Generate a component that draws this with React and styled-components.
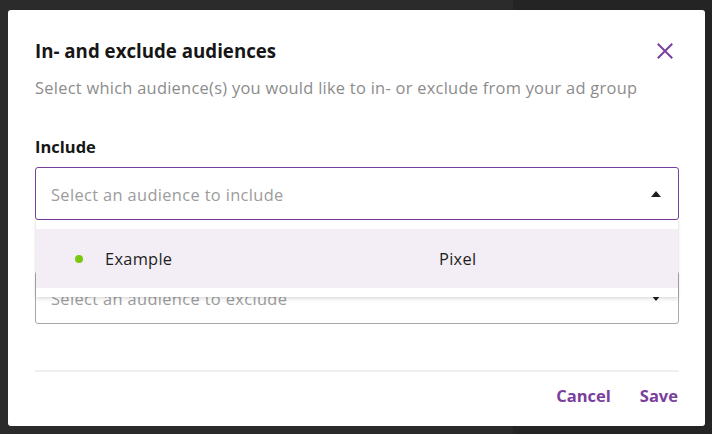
import styled, { createGlobalStyle } from "styled-components";

const GlobalStyle = createGlobalStyle`
  html, body {
    margin: 0;
    padding: 0;
    background: #262626;
  }
  body {
    font-family: "Open Sans", "Liberation Sans", sans-serif;
  }
`;

const purple = "#7a3e9d";

const Backdrop = styled.div`
  width: 712px;
  height: 434px;
  box-sizing: border-box;
  padding: 10px 7px 8px 8px;
  background: linear-gradient(to right, #2b2b2b 513px, #242424 513px);
`;

const Modal = styled.div`
  width: 697px;
  height: 416px;
  box-sizing: border-box;
  background: #fff;
  border-radius: 3px;
  padding: 29px 26px 0 27px;
  display: flex;
  flex-direction: column;
`;

const Header = styled.div`
  display: flex;
  align-items: center;
  justify-content: space-between;
`;

const Title = styled.h2`
  margin: 0;
  font-size: 18.7px;
  line-height: 24px;
  font-weight: 700;
  color: #161616;
`;

const Close = styled.button`
  border: 0;
  background: none;
  padding: 0;
  margin-right: 6px;
  width: 16px;
  height: 16px;
  display: flex;
  cursor: pointer;
`;

const Subtitle = styled.p`
  margin: 14px 0 0;
  font-size: 16.4px;
  letter-spacing: 0.28px;
  line-height: 22px;
  color: #8c8c8c;
`;

const Field = styled.div`
  margin-top: ${(p) => p.$gap}px;
  position: relative;
`;

const Label = styled.div`
  font-size: 16.5px;
  line-height: 20px;
  font-weight: 700;
  color: #161616;
  margin-bottom: 10px;
`;

const Select = styled.div`
  position: relative;
  height: 53px;
  box-sizing: border-box;
  border: 1px solid ${(p) => (p.$open ? purple : "#a8a8a8")};
  border-radius: 3px;
  padding: 0 16px 0 15px;
  display: flex;
  align-items: center;
  justify-content: space-between;
`;

const Placeholder = styled.span`
  font-size: 16.4px;
  letter-spacing: 0.36px;
  color: #9c9c9c;
  padding-top: 1px;
`;

const Arrow = styled.span`
  width: 0;
  height: 0;
  margin-right: 1px;
  border-left: 5px solid transparent;
  border-right: 5px solid transparent;
  ${(p) =>
    p.$up
      ? "border-bottom: 6px solid #1e1e1e;"
      : "border-top: 6px solid #1e1e1e;"}
`;

const Menu = styled.div`
  position: absolute;
  left: 0;
  right: 0;
  top: calc(100% + 1px);
  z-index: 2;
  background: #fff;
  padding: 9px 0;
  box-shadow: 0 2px 4px rgba(0, 0, 0, 0.12), 0 0 2px rgba(0, 0, 0, 0.08);
`;

const Option = styled.div`
  height: 59px;
  display: grid;
  grid-template-columns: 364px 1fr;
  align-items: center;
  padding-left: 39px;
  background: ${(p) => (p.$active ? "#f3eef5" : "#fff")};
  font-size: 16.4px;
  letter-spacing: 0.28px;
  color: #1e1e1e;
`;

const OptionName = styled.span`
  display: flex;
  align-items: center;
  gap: 22px;
`;

const Dot = styled.span`
  width: 8px;
  height: 8px;
  border-radius: 50%;
  background: ${(p) => p.color};
`;

const Footer = styled.div`
  margin-top: auto;
  border-top: 2px solid #efefef;
  height: 56px;
  box-sizing: border-box;
  display: flex;
  align-items: center;
  justify-content: flex-end;
  gap: 29px;
  padding: 0 1px 8px 0;
`;

const TextButton = styled.button`
  border: 0;
  background: none;
  padding: 0;
  font-family: inherit;
  font-size: 16.5px;
  font-weight: 700;
  color: ${purple};
  cursor: pointer;
`;

function CloseIcon() {
  return (
    <svg width="16" height="16" viewBox="0 0 16 16">
      <path
        d="M1.5 1.5 L14.5 14.5 M14.5 1.5 L1.5 14.5"
        stroke={purple}
        strokeWidth="2"
        strokeLinecap="square"
      />
    </svg>
  );
}

export default function App() {
  return (
    <>
      <GlobalStyle />
      <Backdrop>
        <Modal>
          <Header>
            <Title>In- and exclude audiences</Title>
            <Close aria-label="Close">
              <CloseIcon />
            </Close>
          </Header>
          <Subtitle>
            Select which audience(s) you would like to in- or exclude from your
            ad group
          </Subtitle>

          <Field $gap={38}>
            <Label>Include</Label>
            <Select $open>
              <Placeholder>Select an audience to include</Placeholder>
              <Arrow $up />
              <Menu>
                <Option $active>
                  <OptionName>
                    <Dot color="#7ac70c" />
                    Example
                  </OptionName>
                  <span>Pixel</span>
                </Option>
              </Menu>
            </Select>
          </Field>

          <Field $gap={21}>
            <Label>Exclude</Label>
            <Select>
              <Placeholder>Select an audience to exclude</Placeholder>
              <Arrow />
            </Select>
          </Field>

          <Footer>
            <TextButton>Cancel</TextButton>
            <TextButton>Save</TextButton>
          </Footer>
        </Modal>
      </Backdrop>
    </>
  );
}
